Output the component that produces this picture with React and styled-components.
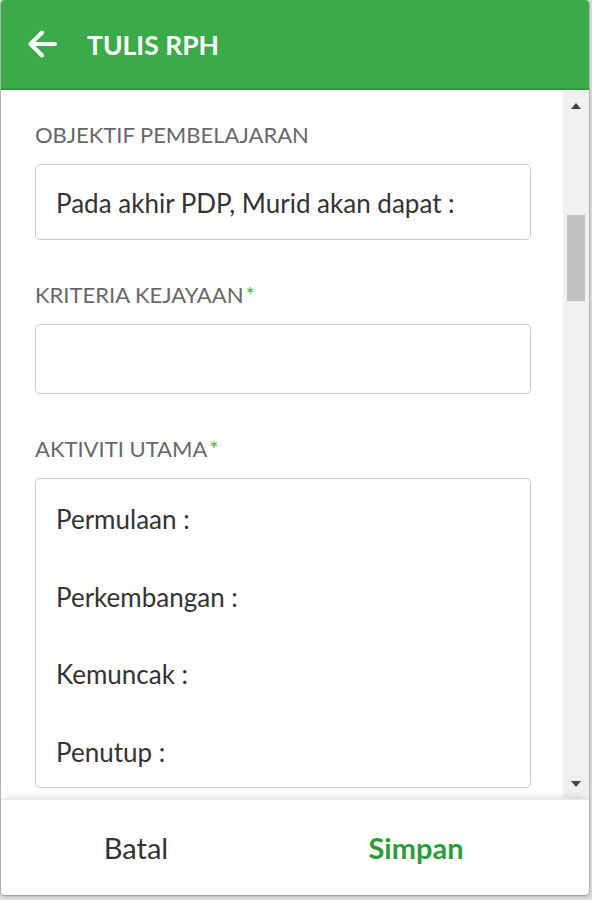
import React from "react";
import styled, { createGlobalStyle } from "styled-components";

const Global = createGlobalStyle`
  html, body { margin: 0; padding: 0; }
  body {
    background: #dcdcdc;
    font-family: Lato, "Open Sans", "Noto Sans", sans-serif;
    width: 592px;
    height: 900px;
    overflow: hidden;
  }
`;

const Dialog = styled.div`
  width: 588px;
  height: 895px;
  margin-left: 1px;
  background: #fff;
  border-radius: 4px;
  overflow: hidden;
  display: flex;
  flex-direction: column;
  box-shadow: 0 1px 3px rgba(0,0,0,0.3), 0 0 0 1px #c8c8c8;
`;

const Header = styled.header`
  height: 88px;
  flex: none;
  background: #3bab49;
  border-bottom: 2px solid #2c9a3a;
  display: flex;
  align-items: center;
  gap: 30px;
  padding-left: 26px;
  color: #fff;
`;

const BackIcon = styled.svg`
  width: 30px;
  height: 28px;
  display: block;
`;

const Title = styled.h1`
  margin: 0;
  font-size: 26.5px;
  font-weight: 700;
  line-height: 1;
  margin-top: 2px;
`;

const Body = styled.div`
  flex: 1;
  display: flex;
  min-height: 0;
`;

const Form = styled.div`
  flex: 1;
  padding: 32px 32px 0 34px;
  overflow: hidden;
`;

const Field = styled.div`
  margin-bottom: 42px;
`;

const Label = styled.div`
  font-size: 22px;
  line-height: 26px;
  color: #686868;
  margin-bottom: 16px;
`;

const Star = styled.span`
  color: #4caf50;
  margin-left: 2px;
`;

const Box = styled.div`
  box-sizing: border-box;
  border: 1.5px solid #c9c9c9;
  border-radius: 5px;
  height: ${(p) => p.$h}px;
  padding: 2px 20px 0;
  display: flex;
  align-items: center;
  font-size: 26px;
  color: #333;
`;

const Area = styled.div`
  box-sizing: border-box;
  border: 1.5px solid #c9c9c9;
  border-radius: 5px;
  height: 310px;
  padding: 2px 20px 0;
  font-size: 26px;
  color: #333;
`;

const Line = styled.div`
  line-height: 77.5px;
  height: 77.5px;
`;

const Track = styled.div`
  width: 26px;
  flex: none;
  background: #f1f1f1;
  display: flex;
  flex-direction: column;
  align-items: center;
`;

const Arrow = styled.div`
  width: 0;
  height: 0;
  border-left: 5px solid transparent;
  border-right: 5px solid transparent;
  ${(p) => (p.$down ? "border-top: 6px solid #444;" : "border-bottom: 6px solid #444;")}
  margin: ${(p) => (p.$down ? "auto 0 12px" : "13px 0 0")};
`;

const Thumb = styled.div`
  width: 18px;
  height: 86px;
  background: #c1c1c1;
  margin-top: 106px;
`;

const Footer = styled.footer`
  height: 95px;
  flex: none;
  display: grid;
  grid-template-columns: 270px 1fr;
  padding-right: 28px;
  align-items: center;
  box-shadow: 0 -6px 8px -4px rgba(0,0,0,0.12);
  border-top: 1px solid #eaeaea;
`;

const Btn = styled.button`
  background: none;
  border: none;
  font-family: inherit;
  font-size: 29px;
  font-weight: ${(p) => (p.$primary ? 700 : 400)};
  color: ${(p) => (p.$primary ? "#2e9b3b" : "#333")};
  justify-self: center;
  padding: 0;
`;

export default function App() {
  return (
    <>
      <Global />
      <Dialog>
        <Header>
          <BackIcon viewBox="0 0 30 28">
            <path d="M28 14H4M15 2.5L3.5 14 15 25.5" stroke="#fff" strokeWidth="4" fill="none" strokeLinecap="round" strokeLinejoin="round" />
          </BackIcon>
          <Title>TULIS RPH</Title>
        </Header>
        <Body>
          <Form>
            <Field>
              <Label>OBJEKTIF PEMBELAJARAN</Label>
              <Box $h={76}>Pada akhir PDP, Murid akan dapat :</Box>
            </Field>
            <Field>
              <Label>
                KRITERIA KEJAYAAN<Star>*</Star>
              </Label>
              <Box $h={70} />
            </Field>
            <Field>
              <Label>
                AKTIVITI UTAMA<Star>*</Star>
              </Label>
              <Area>
                <Line>Permulaan :</Line>
                <Line>Perkembangan :</Line>
                <Line>Kemuncak :</Line>
                <Line>Penutup :</Line>
              </Area>
            </Field>
          </Form>
          <Track>
            <Arrow />
            <Thumb />
            <Arrow $down />
          </Track>
        </Body>
        <Footer>
          <Btn>Batal</Btn>
          <Btn $primary>Simpan</Btn>
        </Footer>
      </Dialog>
    </>
  );
}
